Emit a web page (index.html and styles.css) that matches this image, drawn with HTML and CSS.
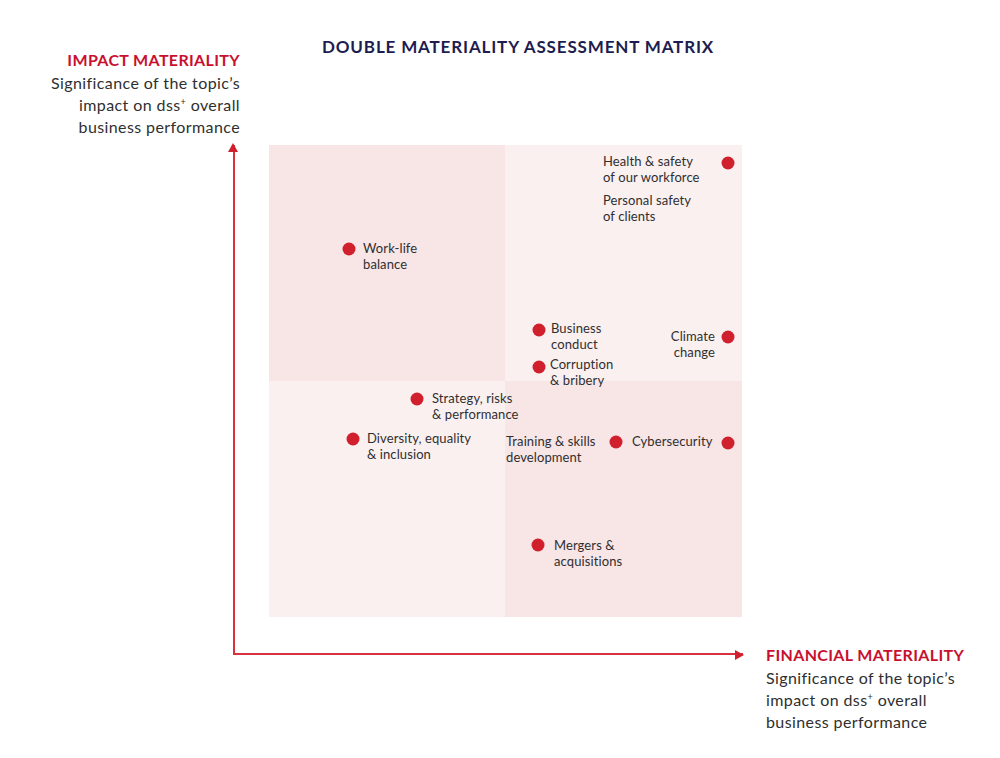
FILE: index.html
```html
<!DOCTYPE html>
<html lang="en">
<head>
<meta charset="utf-8">
<title>Double Materiality Assessment Matrix</title>
<link rel="stylesheet" href="styles.css">
</head>
<body>
<div class="page">
  <header class="header">
    <div class="ylabel">
      <div class="axis-title">IMPACT MATERIALITY</div>
      <div class="axis-sub">Significance of the topic’s<br>impact on dss<sup>+</sup> overall<br>business performance</div>
    </div>
    <h1 class="title">DOUBLE MATERIALITY ASSESSMENT MATRIX</h1>
  </header>
  <main class="main">
    <div class="axes">
      <div class="matrix">
        <div class="quad dark"></div>
        <div class="quad light"></div>
        <div class="quad light"></div>
        <div class="quad dark"></div>

        <span class="dot" style="left:459px;top:18px"></span>
        <span class="dot" style="left:80px;top:104px"></span>
        <span class="dot" style="left:270px;top:185px"></span>
        <span class="dot" style="left:270px;top:222px"></span>
        <span class="dot" style="left:459px;top:192px"></span>
        <span class="dot" style="left:148px;top:254px"></span>
        <span class="dot" style="left:84px;top:294px"></span>
        <span class="dot" style="left:347px;top:297px"></span>
        <span class="dot" style="left:459px;top:298px"></span>
        <span class="dot" style="left:269px;top:400px"></span>

        <div class="lbl" style="left:334px;top:8px">Health &amp; safety<br>of our workforce</div>
        <div class="lbl" style="left:334px;top:47px">Personal safety<br>of clients</div>
        <div class="lbl" style="left:94px;top:95px">Work-life<br>balance</div>
        <div class="lbl" style="left:282px;top:175px">Business<br>conduct</div>
        <div class="lbl" style="left:281px;top:211px">Corruption<br>&amp; bribery</div>
        <div class="lbl end" style="right:27px;top:183px">Climate<br>change</div>
        <div class="lbl" style="left:163px;top:245px">Strategy, risks<br>&amp; performance</div>
        <div class="lbl" style="left:98px;top:285px">Diversity, equality<br>&amp; inclusion</div>
        <div class="lbl" style="left:237px;top:288px">Training &amp; skills<br>development</div>
        <div class="lbl" style="left:363px;top:288px">Cybersecurity</div>
        <div class="lbl" style="left:285px;top:392px">Mergers &amp;<br>acquisitions</div>
      </div>
    </div>
    <div class="xlabel">
      <div class="axis-title">FINANCIAL MATERIALITY</div>
      <div class="axis-sub">Significance of the topic’s<br>impact on dss<sup>+</sup> overall<br>business performance</div>
    </div>
  </main>
</div>
</body>
</html>
```

FILE: styles.css
```css
* { box-sizing: border-box; }

html, body {
  margin: 0;
  padding: 0;
  background: #ffffff;
}

body {
  font-family: "Lato", "Noto Sans", sans-serif;
  color: #2f2f2f;
  width: 1000px;
  height: 758px;
  overflow: hidden;
}

.page {
  width: 1000px;
}

.header {
  display: flex;
  height: 145px;
}

.ylabel {
  width: 240px;
  text-align: right;
  padding-top: 49px;
}

.axis-title {
  color: #c8102e;
  font-weight: 700;
  font-size: 16px;
  line-height: 22px;
  letter-spacing: 0.35px;
}

.axis-sub {
  font-size: 16px;
  line-height: 22px;
  margin-top: 1px;
  color: #2f2f2f;
  letter-spacing: 0.4px;
}

.axis-sub sup {
  font-size: 9px;
  line-height: 0;
  vertical-align: 6px;
}

.title {
  margin: 0 0 0 82px;
  padding-top: 36px;
  font-size: 17px;
  line-height: 22px;
  font-weight: 700;
  color: #1d1d4f;
  letter-spacing: 0.85px;
}

.main {
  display: flex;
  align-items: flex-start;
}

.axes {
  position: relative;
  margin-left: 233px;
  border-left: 2px solid #d9323f;
  border-bottom: 2px solid #d9323f;
  padding: 0 1px 36px 34px;
}

.axes::before {
  content: "";
  position: absolute;
  left: -7px;
  top: -2px;
  border-left: 5px solid transparent;
  border-right: 5px solid transparent;
  border-bottom: 9px solid #d0202e;
}

.axes::after {
  content: "";
  position: absolute;
  right: -1px;
  bottom: -7px;
  border-top: 5px solid transparent;
  border-bottom: 5px solid transparent;
  border-left: 9px solid #d0202e;
}

.matrix {
  position: relative;
  display: grid;
  grid-template-columns: 236px 237px;
  grid-template-rows: 236px 236px;
}

.quad.dark { background: #f8e5e6; }
.quad.light { background: #fbf0f0; }

.dot {
  position: absolute;
  width: 13px;
  height: 13px;
  border-radius: 50%;
  background: #d0202e;
  transform: translate(-50%, -50%);
}

.lbl {
  position: absolute;
  font-size: 13px;
  line-height: 16px;
  color: #2f2f2f;
  white-space: nowrap;
  letter-spacing: 0.1px;
}

.lbl.end { text-align: right; }

.xlabel {
  margin-left: 23px;
  margin-top: 499px;
}
```
